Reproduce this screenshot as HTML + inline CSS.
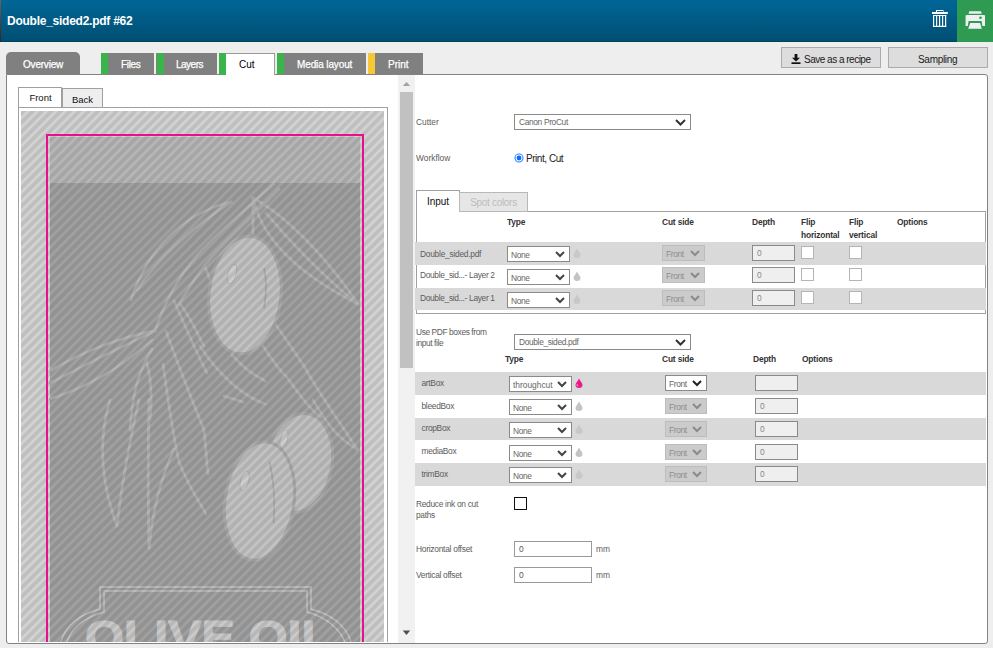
<!DOCTYPE html>
<html><head><meta charset="utf-8">
<style>
*{box-sizing:border-box;margin:0;padding:0}
html,body{width:993px;height:648px;overflow:hidden;background:#eeeeee;font-family:"Liberation Sans",sans-serif;position:relative}
.a{position:absolute}
#hdr{left:0;top:0;width:993px;height:42px;background:linear-gradient(#006697,#004f72);border-bottom:1px solid #00425e}
#title{left:7px;top:14px;color:#fff;font-weight:bold;font-size:12px;letter-spacing:-0.25px;white-space:nowrap}
#green{left:957px;top:0;width:36px;height:42px;background:#2f9a52}
.tab{top:53px;height:21px;background:#808080;color:#fff;font-size:10px;line-height:21px;text-align:center;white-space:nowrap}
.tt{top:54px;font-size:10px;line-height:21px;color:#fff;white-space:nowrap;-webkit-text-stroke:0.25px #fff}
.tab .s{position:absolute;left:0;top:0;width:7px;height:100%}
#panel{left:6px;top:74px;width:982px;height:570px;background:#fff;border:1px solid #828282;border-radius:0 3px 3px 3px}
.btn{top:47px;height:21px;background:#dddddd;border:1px solid #ababab;font-size:10px;line-height:19px;text-align:center;color:#222;white-space:nowrap}
.bt{top:51.5px;font-size:10px;line-height:15px;color:#1a1a1a;white-space:nowrap}
.lbl{font-size:8.4px;color:#5c5c5c;white-space:nowrap;line-height:11px}
.hd{font-size:8.4px;color:#333;font-weight:bold;white-space:nowrap;line-height:12.7px;letter-spacing:-0.15px}
.sel{height:16px;background:#fff;border:1px solid #8a8a8a;font-size:8.4px;color:#666;line-height:14px;padding-left:4px;white-space:nowrap;letter-spacing:-0.35px}
.sel svg{position:absolute;right:4px;top:4px}
.sm{line-height:16px;padding-left:3px}
.dis{background:#cbcbcb;border-color:#bdbdbd;color:#8e8e8e}
.inp{height:16px;background:#efefef;border:1px solid #8a8a8a;font-size:8.4px;color:#888;line-height:14px;padding-left:4px}
.cb{width:13px;height:13px;background:#fff;border:1px solid #b5b5b5}
.row{left:415px;width:571px;background:#d9d9d9}
.drop{width:8px;height:10px}
</style></head><body>
<div id="hdr" class="a"><div class="a" style="left:0;top:0;width:1px;height:42px;background:linear-gradient(#6e625c,#2e2620)"></div></div>
<div id="title" class="a">Double_sided2.pdf #62</div>
<!-- trash -->
<svg class="a" style="left:928px;top:6px" width="24" height="26" viewBox="928 6 24 26">
 <rect x="932" y="12" width="15.8" height="2" fill="#fff"/>
 <rect x="936.5" y="10.5" width="6.5" height="2" fill="none" stroke="#fff" stroke-width="1"/>
 <rect x="933" y="15" width="1.2" height="12" fill="#fff"/>
 <rect x="936" y="15" width="1.2" height="12" fill="#fff"/>
 <rect x="939" y="15" width="1.2" height="12" fill="#fff"/>
 <rect x="942" y="15" width="1.2" height="12" fill="#fff"/>
 <rect x="945" y="15" width="1.2" height="12" fill="#fff"/>
 <rect x="933" y="25.8" width="13.2" height="1.2" fill="#fff"/>
 <rect x="933" y="15" width="13.2" height="1" fill="#fff"/>
</svg>
<div id="green" class="a"></div>
<svg class="a" style="left:960px;top:6px" width="30" height="28" viewBox="960 6 30 28">
 <path d="M969.3 11.2 H981 L981.7 13.8 H968.5z" fill="#f0f0f0"/>
 <path d="M966.5 14.9 H984 A1 1 0 0 1 985 15.9 V25.9 H982.4 L981.6 21.1 H968.6 L967.8 25.9 H965.6 V15.9 A1 1 0 0 1 966.5 14.9z" fill="#f0f0f0"/>
 <circle cx="980.5" cy="17.7" r="1.3" fill="#2f9a52"/>
 <path d="M970.2 23.1 H980.1 L981.8 28.7 H968.2z" fill="#f0f0f0"/>
</svg>

<div id="panel" class="a"></div>

<div class="a tab" style="left:6px;top:52px;width:74px;height:22px;border-radius:5px 5px 0 0"></div>
<div class="a tab" style="left:101px;width:53px"><div class="s" style="background:#39b54a"></div></div>
<div class="a tab" style="left:156px;width:61px"><div class="s" style="background:#39b54a;left:1px"></div></div>
<div class="a tab" style="left:219px;width:56px;height:22px;background:#fff;border:1px solid #9a9a9a;border-bottom:none;border-left:none"><div class="s" style="background:#39b54a;left:0;top:-1px;height:22px"></div></div>
<div class="a tab" style="left:277px;width:89px"><div class="s" style="background:#39b54a"></div></div>
<div class="a tab" style="left:368px;width:55px"><div class="s" style="background:#f6c836"></div></div>
<div class="a tt" style="left:23px;letter-spacing:-0.2px">Overview</div>
<div class="a tt" style="left:121px;letter-spacing:-0.35px">Files</div>
<div class="a tt" style="left:176px;letter-spacing:-0.5px">Layers</div>
<div class="a tt" style="left:239px;color:#000;-webkit-text-stroke:0">Cut</div>
<div class="a tt" style="left:297px;letter-spacing:-0.12px">Media layout</div>
<div class="a tt" style="left:388px">Print</div>
<div class="a btn" style="left:781px;width:100px"></div>
<div class="a btn" style="left:888px;width:100px"></div>
<svg class="a" style="left:791px;top:54px" width="10" height="10" viewBox="0 0 10 10"><path d="M3.6 0h2.8v3.8h2.6L5 7.6 1 3.8h2.6z" fill="#111"/><rect x="0.5" y="8.3" width="9" height="1.7" fill="#111"/></svg>
<div class="a bt" style="left:804px;letter-spacing:-0.5px">Save as a recipe</div>
<div class="a bt" style="left:918px;letter-spacing:-0.3px">Sampling</div>
<!-- preview -->
<div class="a" style="left:18px;top:87px;width:44px;height:21px;background:#fff;border:1px solid #a0a0a0;font-size:9.5px;line-height:20px;text-align:center;color:#111;z-index:2;padding-left:1px">Front</div>
<div class="a" style="left:62px;top:88px;width:41px;height:20px;background:#eee;border:1px solid #a0a0a0;font-size:9.5px;line-height:21px;text-align:center;color:#111">Back</div>
<div class="a" style="left:18px;top:107px;width:370px;height:535px;border:1px solid #a0a0a0;border-bottom:none;background:#fff"></div>
<svg class="a" style="left:21px;top:111px" width="363" height="531" viewBox="0 0 363 531">
 <defs>
  <pattern id="st" width="6.58" height="6.58" patternUnits="userSpaceOnUse" patternTransform="rotate(45)"><rect width="3.29" height="6.58" fill="#000" fill-opacity="0.09" shape-rendering="crispEdges"/></pattern>
 </defs>
 <rect width="363" height="531" fill="#d2d2d2"/>
 <rect x="29" y="26" width="310" height="46" fill="#b6b6b6"/>
 <rect x="29" y="72" width="310" height="470" fill="#a0a0a0"/>
 <g transform="translate(-21,-111)">
 <g fill="none" stroke="#b3b3b3" stroke-width="2.8" stroke-linecap="round">
  <path d="M253 198 C285 215 325 255 358 304"/>
  <path d="M253 198 C262 240 300 275 358 304"/>
  <path d="M266 213 Q305 260 356 303"/>
  <path d="M253 198 L253 236"/>
  <path d="M231 202 C194 210 150 240 131 300"/>
  <path d="M231 202 C200 222 160 255 137 290"/>
  <path d="M274 184 C250 205 215 235 198 254 C180 275 165 300 155 331"/>
  <path d="M279 189 C255 215 225 240 205 265 C192 282 185 295 178 305"/>
  <path d="M155 331 C125 336 85 350 50 371"/>
  <path d="M155 331 C125 345 90 362 50 383"/>
  <path d="M152 340 C120 368 90 386 50 399"/>
  <path d="M152 349 C138 372 132 395 130 430"/>
  <path d="M139 400 C130 440 122 480 117 526"/>
  <path d="M110 400 C98 440 100 480 117 526"/>
  <path d="M146 360 C152 380 152 400 150 420"/>
  <path d="M174 449 C160 480 152 515 149 548"/>
  <path d="M149 400 C148 450 148 500 149 548"/>
  <path d="M163 364 C168 400 172 430 179 462 C188 485 198 500 206 514"/>
  <path d="M166 331 C178 365 192 400 204 430 C206 450 207 465 208 474"/>
  <path d="M174 301 C185 325 195 350 207 373"/>
  <path d="M181 305 C192 320 198 335 204 346"/>
  <path d="M205 267 L212 284"/>
  <path d="M200 346 C215 370 240 395 265 404"/>
  <path d="M232 355 C245 370 255 375 265 381"/>
  <path d="M224 396 L243 402"/>
  <path d="M276 325 C290 345 300 360 304 366 C320 395 335 415 357 449"/>
  <path d="M263 346 C275 365 285 376 286 376 C300 395 310 410 321 417"/>
  <path d="M313 400 C325 420 335 437 357 449"/>
 </g>
 <g stroke="#aaaaaa" stroke-width="3">
  <ellipse cx="299" cy="463" rx="33" ry="50" transform="rotate(10 299 463)" fill="#c0c0c0"/>
  <ellipse cx="259.5" cy="501" rx="34.5" ry="59.5" transform="rotate(8 259.5 501)" fill="#c2c2c2"/>
  <ellipse cx="245" cy="295" rx="36" ry="59" transform="rotate(6 245 295)" fill="#c2c2c2"/>
 </g>
 <g fill="#cecece" stroke="#b4b4b4" stroke-width="1">
  <ellipse cx="232" cy="274" rx="4" ry="10" transform="rotate(15 232 274)"/>
  <ellipse cx="244.6" cy="481" rx="4" ry="10" transform="rotate(15 244.6 481)"/>
  <ellipse cx="284" cy="439" rx="3.5" ry="9" transform="rotate(15 284 439)"/>
 </g>
 <g fill="none" stroke="#ababab" stroke-width="1.6">
  <path d="M264 268 Q268 285 264 308"/>
  <path d="M269.6 462 Q276 490 273.5 523"/>
 </g>
 <g fill="none" stroke="#c4c4c4" stroke-width="1.5">
  <path d="M100 587 H311 V609 Q345 618 352 645"/>
  <path d="M100 587 V609 Q66 618 60 645"/>
  <path d="M104 591 H307 V612 Q338 621 346 645"/>
  <path d="M104 591 V612 Q72 621 66 645"/>
 </g>
 <text x="85" y="653" font-family="Liberation Sans" font-weight="bold" font-size="46" fill="#cacaca" stroke="#cacaca" stroke-width="1.2" textLength="247" lengthAdjust="spacingAndGlyphs">OLIVE OIL</text>
 </g>
 <rect width="363" height="531" fill="url(#st)"/>
 <rect x="26" y="24" width="316" height="520" fill="none" stroke="#e8108c" stroke-width="2"/>
</svg>

<!-- scrollbar -->
<div class="a" style="left:398px;top:75px;width:17px;height:568px;background:#f1f1f1"></div>
<div class="a" style="left:400px;top:92px;width:13px;height:276px;background:#c1c1c1"></div>
<svg class="a" style="left:402px;top:81px" width="9" height="6"><path d="M0.8 5 L4.5 1 L8.2 5z" fill="#a3a3a3"/></svg>
<svg class="a" style="left:402px;top:630px" width="9" height="6"><path d="M0.8 0.5 L4.5 5 L8.2 0.5z" fill="#505050"/></svg>

<!-- form -->
<div class="a lbl" style="left:416px;top:117px">Cutter</div>
<div class="a sel" style="left:514px;top:114px;width:177px">Canon ProCut<svg width="11" height="7" viewBox="0 0 11 7" style="right:4px;top:3.5px"><path d="M1 1l4.5 4.5L10 1" fill="none" stroke="#333" stroke-width="2"/></svg></div>
<div class="a lbl" style="left:416px;top:153px">Workflow</div>
<svg class="a" style="left:513.5px;top:152.5px" width="10" height="10"><circle cx="5" cy="5" r="4" fill="#fff" stroke="#2f86ff" stroke-width="1.1"/><circle cx="5" cy="5" r="2.4" fill="#0a6cff"/></svg>
<div class="a" style="left:526px;top:153px;font-size:10px;color:#222;line-height:12px;white-space:nowrap;letter-spacing:-0.45px">Print, Cut</div>

<div class="a" style="left:416px;top:211px;width:570px;height:103px;border:1px solid #a0a0a0;background:#fff"></div>
<div class="a" style="left:416px;top:190px;width:44px;height:22px;background:#fff;border:1px solid #a0a0a0;border-bottom:none;font-size:10px;line-height:21px;text-align:center;color:#111">Input</div>
<div class="a" style="left:459px;top:192px;width:69px;height:20px;background:#e6e6e6;border:1px solid #b8b8b8;font-size:10px;line-height:19px;text-align:center;color:#bcbcbc;white-space:nowrap;letter-spacing:-0.3px">Spot colors</div>

<div class="a hd" style="left:507px;top:216px">Type</div>
<div class="a hd" style="left:662px;top:216px">Cut side</div>
<div class="a hd" style="left:752px;top:216px">Depth</div>
<div class="a hd" style="left:801px;top:216px">Flip<br>horizontal</div>
<div class="a hd" style="left:849px;top:216px">Flip<br>vertical</div>
<div class="a hd" style="left:897px;top:216px">Options</div>

<div class="a row" style="top:242px;height:23px"></div>
<div class="a row" style="top:288px;height:22px"></div>

<div class="a lbl" style="left:420px;top:248.5px;letter-spacing:-0.25px">Double_sided.pdf</div>
<div class="a lbl" style="left:420px;top:270px;letter-spacing:-0.33px">Double_sid...- Layer 2</div>
<div class="a lbl" style="left:420px;top:293px;letter-spacing:-0.33px">Double_sid...- Layer 1</div>
<!-- input rows controls -->
<div class="a sel sm" style="left:507px;top:246px;width:63px">None<svg width="10" height="7" viewBox="0 0 10 7"><path d="M1 1l4 4l4-4" fill="none" stroke="#444" stroke-width="2"/></svg></div>
<div class="a sel sm" style="left:507px;top:269px;width:63px">None<svg width="10" height="7" viewBox="0 0 10 7"><path d="M1 1l4 4l4-4" fill="none" stroke="#444" stroke-width="2"/></svg></div>
<div class="a sel sm" style="left:507px;top:292px;width:63px">None<svg width="10" height="7" viewBox="0 0 10 7"><path d="M1 1l4 4l4-4" fill="none" stroke="#444" stroke-width="2"/></svg></div>
<svg class="a drop" style="left:573px;top:248px" viewBox="0 0 8 10"><path d="M4 0.5 C5 3 7.5 5 7.5 7 A3.5 3 0 0 1 0.5 7 C0.5 5 3 3 4 0.5z" fill="#c8c8c8"/></svg>
<svg class="a drop" style="left:573px;top:271px" viewBox="0 0 8 10"><path d="M4 0.5 C5 3 7.5 5 7.5 7 A3.5 3 0 0 1 0.5 7 C0.5 5 3 3 4 0.5z" fill="#c4c4c4"/></svg>
<svg class="a drop" style="left:573px;top:294px" viewBox="0 0 8 10"><path d="M4 0.5 C5 3 7.5 5 7.5 7 A3.5 3 0 0 1 0.5 7 C0.5 5 3 3 4 0.5z" fill="#c8c8c8"/></svg>

<div class="a sel sm dis" style="left:662px;top:245px;width:43px">Front<svg width="10" height="7" viewBox="0 0 10 7"><path d="M1 1l4 4l4-4" fill="none" stroke="#8a8a8a" stroke-width="2"/></svg></div>
<div class="a sel sm dis" style="left:662px;top:267px;width:43px">Front<svg width="10" height="7" viewBox="0 0 10 7"><path d="M1 1l4 4l4-4" fill="none" stroke="#8a8a8a" stroke-width="2"/></svg></div>
<div class="a sel sm dis" style="left:662px;top:290px;width:43px">Front<svg width="10" height="7" viewBox="0 0 10 7"><path d="M1 1l4 4l4-4" fill="none" stroke="#8a8a8a" stroke-width="2"/></svg></div>
<div class="a inp" style="left:752px;top:245px;width:43px">0</div>
<div class="a inp" style="left:752px;top:267px;width:43px">0</div>
<div class="a inp" style="left:752px;top:290px;width:43px">0</div>
<div class="a cb" style="left:801px;top:246px"></div>
<div class="a cb" style="left:801px;top:268px"></div>
<div class="a cb" style="left:801px;top:291px"></div>
<div class="a cb" style="left:849px;top:246px"></div>
<div class="a cb" style="left:849px;top:268px"></div>
<div class="a cb" style="left:849px;top:291px"></div>

<!-- pdf boxes -->
<div class="a lbl" style="left:416px;top:327px;letter-spacing:-0.4px">Use PDF boxes from<br>input file</div>
<div class="a sel" style="left:514px;top:334px;width:177px">Double_sided.pdf<svg width="11" height="7" viewBox="0 0 11 7" style="right:4px;top:3.5px"><path d="M1 1l4.5 4.5L10 1" fill="none" stroke="#333" stroke-width="2"/></svg></div>
<div class="a hd" style="left:505px;top:353px">Type</div>
<div class="a hd" style="left:662px;top:353px">Cut side</div>
<div class="a hd" style="left:753px;top:353px">Depth</div>
<div class="a hd" style="left:802px;top:353px">Options</div>

<div class="a row" style="top:372px;height:23px"></div>
<div class="a row" style="top:418px;height:22px"></div>
<div class="a row" style="top:463px;height:23px"></div>

<div class="a lbl" style="left:421.5px;top:378px;letter-spacing:-0.3px">artBox</div>
<div class="a lbl" style="left:421.5px;top:401px;letter-spacing:-0.3px">bleedBox</div>
<div class="a lbl" style="left:421.5px;top:423px;letter-spacing:-0.3px">cropBox</div>
<div class="a lbl" style="left:421.5px;top:446px;letter-spacing:-0.3px">mediaBox</div>
<div class="a lbl" style="left:421.5px;top:469px;letter-spacing:-0.3px">trimBox</div>

<div class="a sel sm" style="left:509px;top:376px;width:63px;letter-spacing:0">throughcut<svg width="10" height="7" viewBox="0 0 10 7"><path d="M1 1l4 4l4-4" fill="none" stroke="#444" stroke-width="2"/></svg></div>
<div class="a sel sm" style="left:509px;top:399px;width:63px">None<svg width="10" height="7" viewBox="0 0 10 7"><path d="M1 1l4 4l4-4" fill="none" stroke="#444" stroke-width="2"/></svg></div>
<div class="a sel sm" style="left:509px;top:422px;width:63px">None<svg width="10" height="7" viewBox="0 0 10 7"><path d="M1 1l4 4l4-4" fill="none" stroke="#444" stroke-width="2"/></svg></div>
<div class="a sel sm" style="left:509px;top:445px;width:63px">None<svg width="10" height="7" viewBox="0 0 10 7"><path d="M1 1l4 4l4-4" fill="none" stroke="#444" stroke-width="2"/></svg></div>
<div class="a sel sm" style="left:509px;top:467px;width:63px">None<svg width="10" height="7" viewBox="0 0 10 7"><path d="M1 1l4 4l4-4" fill="none" stroke="#444" stroke-width="2"/></svg></div>
<svg class="a drop" style="left:575px;top:378px" viewBox="0 0 8 10"><path d="M4 0.5 C5 3 7.5 5 7.5 7 A3.5 3 0 0 1 0.5 7 C0.5 5 3 3 4 0.5z" fill="#ea1a8e"/><path d="M2.2 6.2 Q1.8 7.5 2.6 8.3" stroke="#fff" stroke-width="0.9" fill="none" opacity="0.8"/></svg>
<svg class="a drop" style="left:575px;top:401px" viewBox="0 0 8 10"><path d="M4 0.5 C5 3 7.5 5 7.5 7 A3.5 3 0 0 1 0.5 7 C0.5 5 3 3 4 0.5z" fill="#c4c4c4"/></svg>
<svg class="a drop" style="left:575px;top:424px" viewBox="0 0 8 10"><path d="M4 0.5 C5 3 7.5 5 7.5 7 A3.5 3 0 0 1 0.5 7 C0.5 5 3 3 4 0.5z" fill="#c8c8c8"/></svg>
<svg class="a drop" style="left:575px;top:447px" viewBox="0 0 8 10"><path d="M4 0.5 C5 3 7.5 5 7.5 7 A3.5 3 0 0 1 0.5 7 C0.5 5 3 3 4 0.5z" fill="#c4c4c4"/></svg>
<svg class="a drop" style="left:575px;top:469px" viewBox="0 0 8 10"><path d="M4 0.5 C5 3 7.5 5 7.5 7 A3.5 3 0 0 1 0.5 7 C0.5 5 3 3 4 0.5z" fill="#c8c8c8"/></svg>

<div class="a sel sm" style="left:665px;top:375px;width:42px">Front<svg width="10" height="7" viewBox="0 0 10 7"><path d="M1 1l4 4l4-4" fill="none" stroke="#222" stroke-width="2"/></svg></div>
<div class="a sel sm dis" style="left:665px;top:398px;width:42px">Front<svg width="10" height="7" viewBox="0 0 10 7"><path d="M1 1l4 4l4-4" fill="none" stroke="#8a8a8a" stroke-width="2"/></svg></div>
<div class="a sel sm dis" style="left:665px;top:421px;width:42px">Front<svg width="10" height="7" viewBox="0 0 10 7"><path d="M1 1l4 4l4-4" fill="none" stroke="#8a8a8a" stroke-width="2"/></svg></div>
<div class="a sel sm dis" style="left:665px;top:444px;width:42px">Front<svg width="10" height="7" viewBox="0 0 10 7"><path d="M1 1l4 4l4-4" fill="none" stroke="#8a8a8a" stroke-width="2"/></svg></div>
<div class="a sel sm dis" style="left:665px;top:466px;width:42px">Front<svg width="10" height="7" viewBox="0 0 10 7"><path d="M1 1l4 4l4-4" fill="none" stroke="#8a8a8a" stroke-width="2"/></svg></div>
<div class="a inp" style="left:755px;top:375px;width:43px"></div>
<div class="a inp" style="left:755px;top:398px;width:43px">0</div>
<div class="a inp" style="left:755px;top:421px;width:43px">0</div>
<div class="a inp" style="left:755px;top:444px;width:43px">0</div>
<div class="a inp" style="left:755px;top:466px;width:43px">0</div>

<!-- bottom -->
<div class="a lbl" style="left:416px;top:499px;letter-spacing:-0.3px">Reduce ink on cut<br>paths</div>
<div class="a cb" style="left:514px;top:497px;border-color:#111"></div>
<div class="a lbl" style="left:416px;top:544px;letter-spacing:-0.25px">Horizontal offset</div>
<div class="a inp" style="left:514px;top:541px;width:78px;background:#fff;color:#555;border-color:#999">0</div>
<div class="a lbl" style="left:596px;top:544px">mm</div>
<div class="a lbl" style="left:416px;top:570px;letter-spacing:-0.3px">Vertical offset</div>
<div class="a inp" style="left:514px;top:567px;width:78px;background:#fff;color:#555;border-color:#999">0</div>
<div class="a lbl" style="left:596px;top:570px">mm</div>

</body></html>
